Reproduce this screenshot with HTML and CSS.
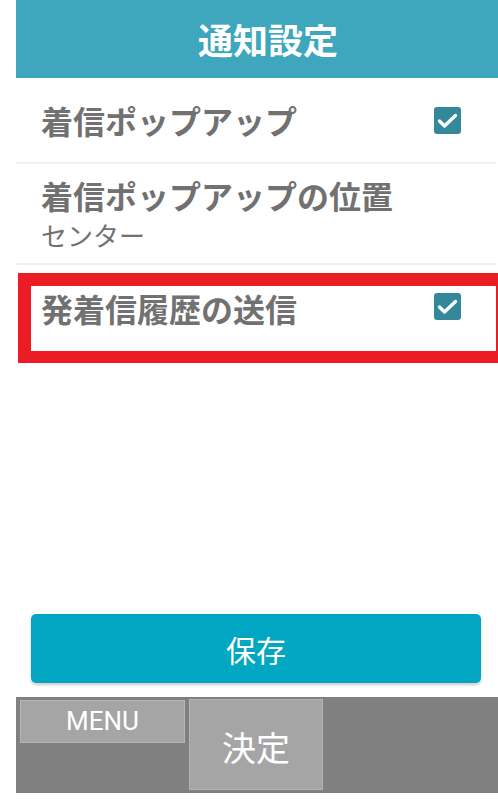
FILE: index.html
```html
<!DOCTYPE html>
<html lang="ja">
<head>
<meta charset="utf-8">
<title>通知設定</title>
<link rel="stylesheet" href="styles.css">
</head>
<body>
<div class="app">
  <header class="header"><h1 class="title">通知設定</h1></header>
  <div class="list">
    <div class="row row-single">
      <span class="row-title">着信ポップアップ</span>
      <span class="check"><svg viewBox="0 0 27 27" width="27" height="27"><path d="M5.5 14 L10.5 19 L21.5 8.5" fill="none" stroke="#fff" stroke-width="3.4" stroke-linecap="round" stroke-linejoin="round"/></svg></span>
    </div>
    <div class="divider"></div>
    <div class="row row-double">
      <div class="row-texts">
        <span class="row-title">着信ポップアップの位置</span>
        <span class="row-sub">センター</span>
      </div>
    </div>
    <div class="divider"></div>
    <div class="highlight">
      <div class="row row-hl">
        <span class="row-title">発着信履歴の送信</span>
        <span class="check"><svg viewBox="0 0 27 27" width="27" height="27"><path d="M5.5 14 L10.5 19 L21.5 8.5" fill="none" stroke="#fff" stroke-width="3.4" stroke-linecap="round" stroke-linejoin="round"/></svg></span>
      </div>
    </div>
  </div>
  <div class="spacer"></div>
  <button class="save">保存</button>
  <footer class="softkeys">
    <div class="key key-menu">MENU</div>
    <div class="key key-ok">決定</div>
  </footer>
</div>
</body>
</html>
```

FILE: styles.css
```css
html, body {
  margin: 0;
  padding: 0;
  background: #ffffff;
  overflow: hidden;
}
body {
  font-family: "Noto Sans CJK JP", "Noto Sans", sans-serif;
}
.app {
  margin-left: 16px;
  width: 482px;
  height: 801px;
  display: flex;
  flex-direction: column;
}
.header {
  height: 78px;
  background: #3ea6bd;
  display: flex;
  align-items: center;
  justify-content: center;
  padding-left: 22px;
  box-sizing: border-box;
}
.title {
  margin: 0;
  color: #ffffff;
  font-size: 35px;
  font-weight: 700;
  line-height: 1;
  position: relative;
  top: -1px;
}
.list {
  display: flex;
  flex-direction: column;
}
.row {
  display: flex;
  align-items: center;
  justify-content: space-between;
  box-sizing: border-box;
}
.row-single {
  height: 84px;
  padding: 0 35px 0 25px;
  width: 480px;
}
.row-double {
  height: 99px;
  padding: 12px 35px 0 25px;
  width: 480px;
  align-items: flex-start;
}
.row-texts {
  display: flex;
  flex-direction: column;
  gap: 6px;
}
.row-title {
  color: #717171;
  font-size: 32px;
  font-weight: 700;
  line-height: 38px;
  white-space: nowrap;
}
.row-sub {
  color: #717171;
  font-size: 26px;
  font-weight: 400;
  line-height: 30px;
}
.divider {
  height: 2px;
  width: 480px;
  background: #f1f1f1;
}
.highlight {
  margin-top: 8px;
  margin-left: 2px;
  width: 480px;
  box-sizing: border-box;
  border-style: solid;
  border-color: #ec1c24;
  border-width: 13px 2px 12px 13px;
  height: 90px;
}
.row-hl {
  height: 64px;
  padding: 3px 35px 0 10px;
  align-items: flex-start;
}
.row-hl .check {
  margin-top: 4px;
}
.check {
  width: 27px;
  height: 27px;
  border-radius: 3px;
  background: #33889a;
  display: flex;
  flex-shrink: 0;
}
.spacer {
  flex: 1;
}
.save {
  margin: 0 0 14px 15px;
  width: 450px;
  height: 69px;
  border: none;
  border-radius: 5px;
  background: #00a6c2;
  color: #ffffff;
  font-family: "Noto Sans CJK JP", sans-serif;
  font-size: 30px;
  font-weight: 400;
  box-shadow: 0 2px 3px rgba(0, 0, 0, 0.2);
  padding: 0;
}
.softkeys {
  height: 96px;
  margin-bottom: 8px;
  background: #808080;
  display: flex;
  align-items: flex-start;
  padding: 2px 0 0 4px;
  box-sizing: border-box;
  gap: 4px;
}
.key {
  background: #a5a5a5;
  border: 1px solid #b5b5b5;
  box-sizing: border-box;
  color: #ffffff;
  display: flex;
  justify-content: center;
}
.key-menu {
  width: 165px;
  height: 43px;
  margin-top: 1px;
  font-family: Roboto, "Noto Sans", sans-serif;
  font-size: 26px;
  line-height: 40px;
  align-items: flex-start;
}
.key-ok {
  width: 134px;
  height: 91px;
  font-size: 34px;
  align-items: center;
  padding-top: 4px;
}
```
